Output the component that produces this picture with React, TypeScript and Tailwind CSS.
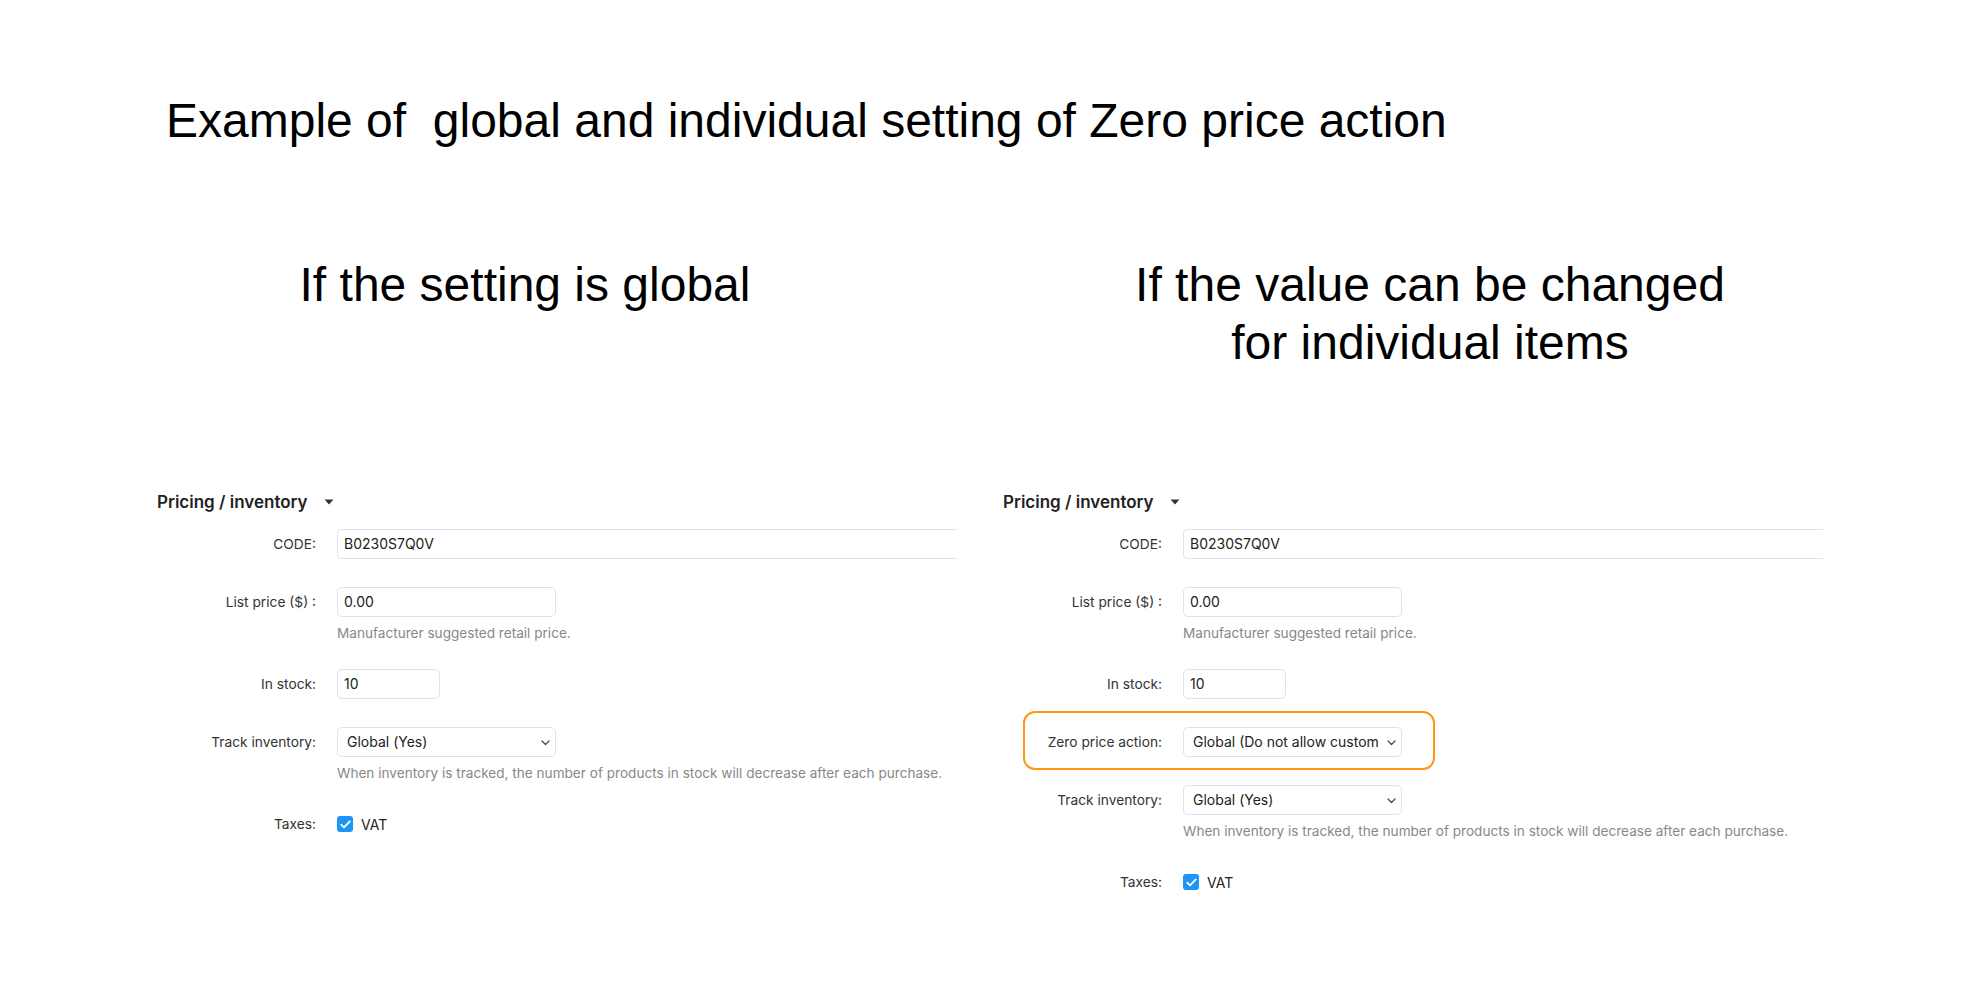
import React from "react";

const Caret = () => (
  <svg width="10" height="6" viewBox="0 0 10 6" className="ml-[16px]">
    <path d="M0.5 0.5 L9.5 0.5 L5 5.5 Z" fill="#333" />
  </svg>
);

const Chevron = () => (
  <svg width="9" height="6" viewBox="0 0 9 6" className="absolute right-[5px] top-[12px]">
    <path d="M1 1 L4.5 4.5 L8 1" fill="none" stroke="#444" strokeWidth="1.2" strokeLinecap="round" strokeLinejoin="round" />
  </svg>
);

const Row = ({ label, children, help }: { label: string; children: React.ReactNode; help?: string }) => (
  <div className="flex items-start">
    <div className="w-[159px] shrink-0 text-right text-[13.75px] leading-[30px] text-[#333]">{label}</div>
    <div className="ml-[21px] flex-1 min-w-0">
      {children}
      {help && <p className="mt-[8px] text-[13.6px] leading-[16px] text-[#888] whitespace-nowrap">{help}</p>}
    </div>
  </div>
);

const Input = ({ value, width }: { value: string; width: string }) => (
  <div className={"h-[30px] rounded-[5px] border border-[#dde2ef] pl-[6px] text-[14px] leading-[28px] text-[#222] " + width}>{value}</div>
);

const Select = ({ value }: { value: string }) => (
  <div className="relative h-[30px] w-[219px] rounded-[5px] border border-[#dde2ef] pl-[9px] pr-[22px] text-[14px] leading-[28px] text-[#222] overflow-hidden whitespace-nowrap">
    <span className="block overflow-hidden">{value}</span>
    <Chevron />
  </div>
);

const Checkbox = () => (
  <div className="flex h-[30px] items-center">
    <span className="flex h-[16px] w-[16px] items-center justify-center rounded-[3px] bg-[#1e94f6]">
      <svg width="11" height="9" viewBox="0 0 11 9">
        <path d="M1.2 4.6 L4 7.3 L9.8 1.4" fill="none" stroke="white" strokeWidth="1.8" strokeLinecap="round" strokeLinejoin="round" />
      </svg>
    </span>
    <span className="ml-[8px] text-[14px] text-[#222]">VAT</span>
  </div>
);

const trackHelp = "When inventory is tracked, the number of products in stock will decrease after each purchase.";

const Form = ({ withZero }: { withZero?: boolean }) => (
  <div style={{ fontFamily: "Inter, 'Noto Sans', sans-serif" }}>
    <div className="flex items-center text-[17px] leading-[24px] font-semibold text-[#222]">
      Pricing / inventory
      <Caret />
    </div>
    <div className="mt-[15px] flex flex-col gap-[28px]">
      <Row label="CODE:">
        <div className="h-[30px] rounded-l-[5px] border border-r-0 border-[#dde2ef] pl-[6px] text-[14px] leading-[28px] text-[#222]">B0230S7Q0V</div>
      </Row>
      <Row label="List price ($) :" help="Manufacturer suggested retail price.">
        <Input value="0.00" width="w-[219px]" />
      </Row>
      <Row label="In stock:">
        <Input value="10" width="w-[103px]" />
      </Row>
      {withZero && (
        <div className="relative">
          <div className="pointer-events-none absolute left-[20px] top-[-16px] h-[59px] w-[412px] rounded-[12px] border-[2.5px] border-[#ff9712]" />
          <Row label="Zero price action:">
            <Select value="Global (Do not allow customers to add the product to cart)" />
          </Row>
        </div>
      )}
      <Row label="Track inventory:" help={trackHelp}>
        <Select value="Global (Yes)" />
      </Row>
      <Row label="Taxes:">
        <Checkbox />
      </Row>
    </div>
  </div>
);

export default function App() {
  return (
    <div className="min-h-screen bg-white text-black" style={{ fontFamily: "'Liberation Sans', Arial, sans-serif" }}>
      <h1 className="pt-[92px] pl-[166px] text-[48px] leading-[58px] font-normal whitespace-pre">
        {"Example of  global and individual setting of Zero price action"}
      </h1>
      <div className="mt-[106px] flex pl-[157px]">
        <div className="w-[800px] shrink-0">
          <div className="h-[234px] w-[736px] text-center text-[48px] leading-[58px]">If the setting is global</div>
          <Form />
        </div>
        <div className="ml-[46px] w-[820px] shrink-0">
          <div className="h-[234px] w-[854px] text-center text-[48px] leading-[58px]">
            If the value can be changed
            <br />
            for individual items
          </div>
          <Form withZero />
        </div>
      </div>
    </div>
  );
}
